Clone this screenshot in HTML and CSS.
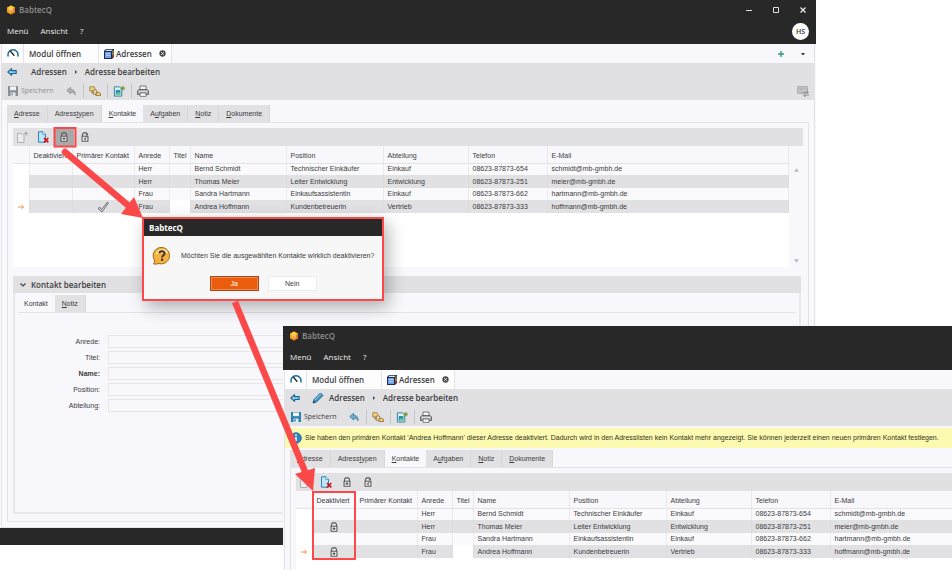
FILE: index.html
```html
<!DOCTYPE html>
<html lang="de">
<head>
    <meta charset="UTF-8">
    <meta name="viewport" content="width=device-width, initial-scale=1.0">
    <title>BabtecQ - Kontakt deaktivieren</title>
    <link rel="stylesheet" href="styles.css">
</head>
<body>

<!-- Icon definitions -->
<svg class="sprite" aria-hidden="true">
    <symbol id="i-logo" viewBox="0 0 12 12">
        <path d="M6 .5l4.800 2.700v5.600L6 11.500 1.200 8.800V3.200z" fill="#f6a21a"/>
        <path d="M6 .5l4.800 2.700L6 6 1.200 3.200z" fill="#ffc933"/>
        <path d="M6 6l4.800-2.800v5.600L6 11.500z" fill="#ee7a1c"/>
        <path d="M4 3.200l4 2v3.300L4 6.600z" fill="#ffe9a0"/>
        <path d="M5.200 5.200l1.800.9v1.200l-1.800-.9z" fill="#e8611a"/>
    </symbol>
    <symbol id="i-gauge" viewBox="0 0 12 12">
        <path d="M1.300 8.500a5 5 0 1 1 9.400 0" fill="none" stroke="#1f6f99" stroke-width="1.500"/>
        <path d="M3.600 3.400l3.300 3.800" stroke="#222" stroke-width="1.400" stroke-linecap="round"/>
    </symbol>
    <symbol id="i-book" viewBox="0 0 12 12">
        <path d="M1 3l2-2h8v8l-2 2H1z" fill="#222c48"/>
        <path d="M2 4h6v6H2z" fill="#6f9fe6"/>
        <path d="M3 5.500h4M3 7.500h4" stroke="#d4e4ff" stroke-width=".7"/>
        <path d="M3.500 1.800h6L8.500 3h-6z" fill="#dfe6f2"/>
        <path d="M9.200 3l1.500-1v2l-1.500 1z" fill="#4caf50"/>
        <path d="M9.200 5.300l1.500-1v2l-1.500 1z" fill="#f5a623"/>
        <path d="M9.200 7.600l1.500-1v2l-1.500 1z" fill="#d9372c"/>
    </symbol>
    <symbol id="i-close" viewBox="0 0 10 10">
        <circle cx="5" cy="5" r="4.500" fill="#4a4a4a"/>
        <path d="M3.200 3.200l3.600 3.600M6.800 3.200L3.200 6.800" stroke="#fff" stroke-width="1.300"/>
    </symbol>
    <symbol id="i-back" viewBox="0 0 12 10">
        <path d="M1 5l4.500-4v2.300H11v3.400H5.500V9z" fill="#8fcdf0" stroke="#17618f" stroke-width="1.300" stroke-linejoin="round"/>
    </symbol>
    <symbol id="i-pencil" viewBox="0 0 12 12">
        <path d="M1 11l1-3.500L8.500 1 11 3.500 4.500 10z" fill="#3b93c9" stroke="#1b5c88" stroke-width=".8"/>
        <path d="M3 8L9 2" stroke="#a8dcf5" stroke-width=".9"/>
        <path d="M1 11l.7-2 1.300 1.300z" fill="#222"/>
    </symbol>
    <symbol id="i-save" viewBox="0 0 12 12">
        <path d="M1 1h10v10H1z" fill="currentColor"/>
        <path d="M3 1.500h6v3.700H3z" fill="#eef6fb"/>
        <path d="M3.500 7.500h5V11h-5z" fill="#dceaf2"/>
        <path d="M4.300 8.200h1.400v2.300H4.300z" fill="currentColor"/>
    </symbol>
    <symbol id="i-undo" viewBox="0 0 12 12">
        <path d="M1 5.500L5.500 1.500V4C9 4 11 6 11 10.500 9.500 8 8 7.200 5.500 7.200v2.300z" fill="currentColor" fill-opacity=".55" stroke="currentColor" stroke-width="1" stroke-linejoin="round"/>
    </symbol>
    <symbol id="i-assign" viewBox="0 0 14 12">
        <path d="M1 1h5l1 1.500V6H1z" fill="#f1d27a" stroke="#8a6b2b" stroke-width=".8"/>
        <path d="M5 5h4v5H5z" fill="#fff4cf" stroke="#7a6a4b" stroke-width=".8"/>
        <circle cx="4.500" cy="7.500" r="1.700" fill="#a88a4a"/>
        <path d="M8 7.500h3.500l2 1.500v2.300H8z" fill="#e2b03c" stroke="#80632a" stroke-width=".8"/>
        <circle cx="11" cy="9.500" r="1" fill="#fff"/>
    </symbol>
    <symbol id="i-newdoc" viewBox="0 0 13 12">
        <path d="M1.500 1.500h5.500L9.500 4v7.500h-8z" fill="#d9f0f5" stroke="#2b7d9b"/>
        <path d="M3 5h5v5H3z" fill="#1c8fb4"/>
        <path d="M4 8.700l1.300-1.500 1 1 1-.8V10H4z" fill="#7fcf6a"/>
        <path d="M10.500.5v5M8 3h5M8.800 1.300l3.400 3.400M12.200 1.300L8.800 4.700" stroke="#6b8e23" stroke-width=".9"/>
    </symbol>
    <symbol id="i-print" viewBox="0 0 12 12">
        <path d="M3 1h6v4H3z" fill="#f7f7f9" stroke="#6b6b70" stroke-width=".9"/>
        <path d="M1.800 4.500h8.400l1.300 1.500v3.500H.5V6z" fill="#a9adb3" stroke="#5d6066" stroke-width=".9"/>
        <path d="M3 8h6v3.300H3z" fill="#fff" stroke="#5d6066" stroke-width=".8"/>
        <path d="M1.500 6.500h9" stroke="#e9eaee" stroke-width=".8"/>
    </symbol>
    <symbol id="i-layout" viewBox="0 0 12 12">
        <path d="M.5 1.500h10v7H.5z" fill="#c4c4c8" stroke="#b0b0b4"/>
        <path d="M1 3.500h9M4 3.500v5" stroke="#b2b2b6" stroke-width=".8"/>
        <path d="M6 7.500h5.500M9.500 5.800l2 1.700M12 10H6.500M8.500 11.700l-2-1.700" stroke="#8e8e93" stroke-width="1.100"/>
    </symbol>
    <symbol id="i-doc-add" viewBox="0 0 12 12">
        <path d="M1.500 2.500h4.500l2 2v7H1.500z" fill="#ececef" stroke="#b0b0b5"/>
        <path d="M10 .5v4M8 2.500h4" stroke="#a5a5aa" stroke-width="1.100"/>
    </symbol>
    <symbol id="i-doc-del" viewBox="0 0 12 12">
        <path d="M1.500.8h4.500L8.500 3.300v7.900h-7z" fill="#bfe6f8" stroke="#2b84b5"/>
        <path d="M5.800.8v2.700h2.700" fill="#fff" stroke="#2b84b5" stroke-width=".7"/>
        <path d="M7 7l4.300 4.300M11.300 7L7 11.300" stroke="#d0101c" stroke-width="1.700"/>
    </symbol>
    <symbol id="i-lock" viewBox="0 0 12 12">
        <path d="M3 5V2.500L4.300 1h3.400L9 2.500V5" fill="none" stroke="#5a5a5a" stroke-width="1.300"/>
        <path d="M2.500 5h7v6h-7z" fill="#f4f4f4" stroke="#5a5a5a" stroke-width="1.300"/>
        <path d="M6 6.300v3.400M4.300 8h3.400" stroke="#5a5a5a" stroke-width="1.400"/>
    </symbol>
    <symbol id="i-unlock" viewBox="0 0 12 12">
        <path d="M3 5V2.500L4.300 1h3.400L9 2.500v1L7 3.300" fill="none" stroke="#5a5a5a" stroke-width="1.300"/>
        <path d="M2.500 5h7v6h-7z" fill="#f4f4f4" stroke="#5a5a5a" stroke-width="1.300"/>
        <path d="M7.800 6.500L5.300 8.300l1.500 1.500" fill="none" stroke="#5a5a5a" stroke-width="1.300"/>
    </symbol>
    <symbol id="i-check" viewBox="0 0 12 12">
        <path d="M1 7.500l2-1.200L4.500 8.500 10.500 1l1 .8L5 11z" fill="#d4d4d6" stroke="#68686b" stroke-width=".9" stroke-linejoin="round"/>
    </symbol>
    <symbol id="i-row" viewBox="0 0 10 8">
        <path d="M1 4h7M5.500 1.500L8.500 4 5.500 6.500" fill="none" stroke="#f0893e" stroke-width="1.200"/>
    </symbol>
    <symbol id="i-question" viewBox="0 0 20 18">
        <path d="M1.500 17c1.200-1.200 1.300-2.500.9-4A8.200 8.200 0 1 1 7 16.500C5.500 17 3.500 17.300 1.500 17z" fill="#f6b23c" stroke="#9a6a20" stroke-width="1"/>
        <path d="M3.800 8a6.500 6.500 0 0 1 12.600-1.500C12 4.500 8 6 3.800 8z" fill="#fde4a4"/>
        <path d="M7.300 6.300C7.500 3.500 12.700 3.500 12.600 6.500c0 1.800-2.500 1.900-2.500 4" fill="none" stroke="#3a3026" stroke-width="1.900"/>
        <circle cx="10.100" cy="12.700" r="1.200" fill="#3a3026"/>
    </symbol>
    <symbol id="i-info" viewBox="0 0 12 12">
        <circle cx="6" cy="6" r="5.300" fill="#2d86c4" stroke="#1c5c8d" stroke-width=".8"/>
        <path d="M6 5v4" stroke="#fff" stroke-width="1.500"/>
        <circle cx="6" cy="3.200" r=".9" fill="#fff"/>
    </symbol>
</svg>

<main class="desktop">

    <!-- Window before the contact is deactivated -->
    <section class="window window-back">
        <header class="app-header">
            <div class="title-row">
                <svg class="icon-s"><use href="#i-logo"/></svg>
                <span class="app-name">BabtecQ</span>
                <div class="window-controls">
                    <button type="button" aria-label="Minimieren"><svg viewBox="0 0 8 8"><path d="M1 4.500h6" stroke="#ddd" fill="none"/></svg></button>
                    <button type="button" aria-label="Maximieren"><svg viewBox="0 0 8 8"><path d="M1.500 1.500h5v5h-5z" stroke="#ddd" fill="none"/></svg></button>
                    <button type="button" aria-label="Beenden"><svg viewBox="0 0 8 8"><path d="M1.500 1.500l5 5M6.500 1.500l-5 5" stroke="#eee" stroke-width="1.200"/></svg></button>
                </div>
            </div>
            <nav class="menu-row">
                <a href="#">Menü</a>
                <a href="#">Ansicht</a>
                <a href="#">?</a>
                <span class="avatar">HS</span>
            </nav>
        </header>
        <div class="workspace">
            <div class="module-tabs">
                <button type="button" class="tab-home" aria-label="Cockpit"><svg class="icon"><use href="#i-gauge"/></svg></button>
                <button type="button" class="tab-open">Modul öffnen</button>
                <button type="button" class="tab-module"><svg class="icon"><use href="#i-book"/></svg>Adressen<svg class="icon-close"><use href="#i-close"/></svg></button>
                <div class="tab-actions">
                    <button type="button" class="add" aria-label="Neuer Tab"><svg viewBox="0 0 8 8"><path d="M4 1v6M1 4h6" stroke="#2f9c83" stroke-width="1.400"/></svg></button>
                    <button type="button" aria-label="Tabliste"><svg viewBox="0 0 8 8"><path d="M2 3h4L4 5.500z" fill="#333"/></svg></button>
                </div>
            </div>
            <div class="page-head">
                <div class="breadcrumb">
                    <svg class="icon-s back"><use href="#i-back"/></svg>
                    <a href="#">Adressen</a>
                    <span class="sep"></span>
                    <a href="#">Adresse bearbeiten</a>
                </div>
                <div class="toolbar">
                    <button type="button" class="save" disabled><svg class="icon"><use href="#i-save"/></svg>Speichern</button>
                    <button type="button" class="undo" aria-label="Rückgängig" disabled><svg class="icon-s"><use href="#i-undo"/></svg></button>
                    <button type="button" aria-label="Zuordnen"><svg class="icon"><use href="#i-assign"/></svg></button>
                    <button type="button" aria-label="Neu"><svg class="icon"><use href="#i-newdoc"/></svg></button>
                    <button type="button" aria-label="Drucken"><svg class="icon"><use href="#i-print"/></svg></button>
                    <button type="button" class="layout" aria-label="Layout"><svg class="icon"><use href="#i-layout"/></svg></button>
                </div>
            </div>
            <div class="tabs">
                <button type="button"><u>A</u>dresse</button>
                <button type="button">Adress<u>t</u>ypen</button>
                <button type="button" class="active"><u>K</u>ontakte</button>
                <button type="button">A<u>u</u>fgaben</button>
                <button type="button"><u>N</u>otiz</button>
                <button type="button"><u>D</u>okumente</button>
            </div>
            <div class="panel">
                <div class="grid-toolbar">
                    <button type="button" aria-label="Kontakt hinzufügen" disabled><svg class="icon"><use href="#i-doc-add"/></svg></button>
                    <button type="button" aria-label="Kontakt löschen"><svg class="icon"><use href="#i-doc-del"/></svg></button>
                    <button type="button" class="pressed" aria-label="Deaktivieren"><svg class="icon-s"><use href="#i-lock"/></svg></button>
                    <button type="button" aria-label="Aktivieren"><svg class="icon-s"><use href="#i-unlock"/></svg></button>
                </div>
                <div class="grid">
                    <table>
                        <colgroup>
                            <col class="c-mark"><col class="c-off"><col class="c-prim"><col class="c-anrede"><col class="c-titel">
                            <col class="c-name"><col class="c-pos"><col class="c-abt"><col class="c-tel"><col>
                        </colgroup>
                        <thead>
                            <tr><th></th><th>Deaktiviert</th><th>Primärer Kontakt</th><th>Anrede</th><th>Titel</th><th>Name</th><th>Position</th><th>Abteilung</th><th>Telefon</th><th>E-Mail</th></tr>
                        </thead>
                        <tbody>
                            <tr><td></td><td></td><td></td><td>Herr</td><td></td><td>Bernd Schmidt</td><td>Technischer Einkäufer</td><td>Einkauf</td><td>08623-87873-654</td><td>schmidt@mb-gmbh.de</td></tr>
                            <tr><td></td><td></td><td></td><td>Herr</td><td></td><td>Thomas Meier</td><td>Leiter Entwicklung</td><td>Entwicklung</td><td>08623-87873-251</td><td>meier@mb-gmbh.de</td></tr>
                            <tr><td></td><td></td><td></td><td>Frau</td><td></td><td>Sandra Hartmann</td><td>Einkaufsassistentin</td><td>Einkauf</td><td>08623-87873-662</td><td>hartmann@mb-gmbh.de</td></tr>
                            <tr class="current"><td><svg class="row-mark"><use href="#i-row"/></svg></td><td></td><td class="flag"><svg class="icon"><use href="#i-check"/></svg></td><td>Frau</td><td></td><td>Andrea Hoffmann</td><td>Kundenbetreuerin</td><td>Vertrieb</td><td>08623-87873-333</td><td>hoffmann@mb-gmbh.de</td></tr>
                        </tbody>
                    </table>
                    <div class="scrollbar">
                        <svg viewBox="0 0 6 4"><path d="M0 4h6L3 0z" fill="#b9b9bd"/></svg>
                        <svg viewBox="0 0 6 4"><path d="M0 0h6L3 4z" fill="#b9b9bd"/></svg>
                    </div>
                </div>
                <section class="detail">
                    <h2><svg viewBox="0 0 6 4"><path d="M.5.5L3 3 5.500.5" fill="none" stroke="#444" stroke-width="1.200"/></svg>Kontakt bearbeiten</h2>
                    <div class="tabs tabs-detail">
                        <button type="button" class="active">Kontakt</button>
                        <button type="button"><u>N</u>otiz</button>
                    </div>
                    <form class="contact-form">
                        <label for="anrede">Anrede:</label>
                        <input type="text" id="anrede" name="anrede">
                        <label for="titel">Titel:</label>
                        <input type="text" id="titel" name="titel">
                        <label for="name" class="required">Name:</label>
                        <input type="text" id="name" name="name">
                        <label for="position">Position:</label>
                        <input type="text" id="position" name="position">
                        <label for="abteilung">Abteilung:</label>
                        <input type="text" id="abteilung" name="abteilung">
                    </form>
                </section>
            </div>
        </div>
        <footer class="status-bar"></footer>
    </section>

    <!-- Confirmation dialog -->
    <section class="dialog" role="dialog" aria-labelledby="dialogTitle">
        <h2 id="dialogTitle">BabtecQ</h2>
        <div class="dialog-text">
            <svg class="question"><use href="#i-question"/></svg>
            <p>Möchten Sie die ausgewählten Kontakte wirklich deaktivieren?</p>
        </div>
        <div class="dialog-buttons">
            <button type="button" class="primary">Ja</button>
            <button type="button">Nein</button>
        </div>
    </section>

    <!-- Window after the contact is deactivated -->
    <section class="window window-front">
        <header class="app-header">
            <div class="title-row">
                <svg class="icon-s"><use href="#i-logo"/></svg>
                <span class="app-name">BabtecQ</span>
            </div>
            <nav class="menu-row">
                <a href="#">Menü</a>
                <a href="#">Ansicht</a>
                <a href="#">?</a>
            </nav>
        </header>
        <div class="workspace">
            <div class="module-tabs">
                <button type="button" class="tab-home" aria-label="Cockpit"><svg class="icon"><use href="#i-gauge"/></svg></button>
                <button type="button" class="tab-open">Modul öffnen</button>
                <button type="button" class="tab-module"><svg class="icon"><use href="#i-book"/></svg>Adressen<svg class="icon-close"><use href="#i-close"/></svg></button>
            </div>
            <div class="page-head">
                <div class="breadcrumb">
                    <svg class="icon-s back"><use href="#i-back"/></svg>
                    <svg class="icon pencil"><use href="#i-pencil"/></svg>
                    <a href="#">Adressen</a>
                    <span class="sep"></span>
                    <a href="#">Adresse bearbeiten</a>
                </div>
                <div class="toolbar">
                    <button type="button" class="save"><svg class="icon"><use href="#i-save"/></svg>Speichern</button>
                    <button type="button" class="undo" aria-label="Rückgängig"><svg class="icon-s"><use href="#i-undo"/></svg></button>
                    <button type="button" aria-label="Zuordnen"><svg class="icon"><use href="#i-assign"/></svg></button>
                    <button type="button" aria-label="Neu"><svg class="icon"><use href="#i-newdoc"/></svg></button>
                    <button type="button" aria-label="Drucken"><svg class="icon"><use href="#i-print"/></svg></button>
                </div>
            </div>
            <p class="notice"><svg class="icon"><use href="#i-info"/></svg>Sie haben den primären Kontakt 'Andrea Hoffmann' dieser Adresse deaktiviert. Dadurch wird in den Adresslisten kein Kontakt mehr angezeigt. Sie können jederzeit einen neuen primären Kontakt festlegen.</p>
            <div class="tabs">
                <button type="button"><u>A</u>dresse</button>
                <button type="button">Adress<u>t</u>ypen</button>
                <button type="button" class="active"><u>K</u>ontakte</button>
                <button type="button">A<u>u</u>fgaben</button>
                <button type="button"><u>N</u>otiz</button>
                <button type="button"><u>D</u>okumente</button>
            </div>
            <div class="panel">
                <div class="grid-toolbar">
                    <button type="button" aria-label="Kontakt hinzufügen" disabled><svg class="icon"><use href="#i-doc-add"/></svg></button>
                    <button type="button" aria-label="Kontakt löschen"><svg class="icon"><use href="#i-doc-del"/></svg></button>
                    <button type="button" aria-label="Deaktivieren"><svg class="icon-s"><use href="#i-lock"/></svg></button>
                    <button type="button" aria-label="Aktivieren"><svg class="icon-s"><use href="#i-unlock"/></svg></button>
                </div>
                <div class="grid">
                    <table>
                        <colgroup>
                            <col class="c-mark"><col class="c-off"><col class="c-prim"><col class="c-anrede"><col class="c-titel">
                            <col class="c-name"><col class="c-pos"><col class="c-abt"><col class="c-tel"><col>
                        </colgroup>
                        <thead>
                            <tr><th></th><th>Deaktiviert</th><th>Primärer Kontakt</th><th>Anrede</th><th>Titel</th><th>Name</th><th>Position</th><th>Abteilung</th><th>Telefon</th><th>E-Mail</th></tr>
                        </thead>
                        <tbody>
                            <tr><td></td><td></td><td></td><td>Herr</td><td></td><td>Bernd Schmidt</td><td>Technischer Einkäufer</td><td>Einkauf</td><td>08623-87873-654</td><td>schmidt@mb-gmbh.de</td></tr>
                            <tr><td></td><td class="flag"><svg class="icon-s"><use href="#i-lock"/></svg></td><td></td><td>Herr</td><td></td><td>Thomas Meier</td><td>Leiter Entwicklung</td><td>Entwicklung</td><td>08623-87873-251</td><td>meier@mb-gmbh.de</td></tr>
                            <tr><td></td><td></td><td></td><td>Frau</td><td></td><td>Sandra Hartmann</td><td>Einkaufsassistentin</td><td>Einkauf</td><td>08623-87873-662</td><td>hartmann@mb-gmbh.de</td></tr>
                            <tr class="current"><td><svg class="row-mark"><use href="#i-row"/></svg></td><td class="flag"><svg class="icon-s"><use href="#i-lock"/></svg></td><td></td><td>Frau</td><td></td><td>Andrea Hoffmann</td><td>Kundenbetreuerin</td><td>Vertrieb</td><td>08623-87873-333</td><td>hoffmann@mb-gmbh.de</td></tr>
                        </tbody>
                    </table>
                </div>
            </div>
        </div>
    </section>

    <!-- Step markers and arrows above the windows -->
    <svg class="marks" viewBox="0 0 952 570" aria-hidden="true">
        <g fill="none" stroke="#fb4848">
            <rect x="54.500" y="128" width="21" height="18.500" stroke-width="2"/>
            <rect x="313" y="492" width="42" height="67" stroke-width="2"/>
            <path d="M65 152L130 207" stroke-width="6.500" stroke-linecap="round"/>
            <path d="M235 302L306 474" stroke-width="6.500"/>
        </g>
        <path d="M143 218l-22-4 13-17z" fill="#fb4848"/>
        <path d="M313 491l-18-17 20-6z" fill="#fb4848"/>
    </svg>
</main>

</body>
</html>
```
FILE: styles.css
```css
* {
    margin: 0;
    padding: 0;
    box-sizing: border-box;
}

body {
    font-family: "Liberation Sans", Arial, sans-serif;
    font-size: 7px;
    line-height: 10px;
    color: #3c3c3e;
    background: #fff;
    overflow: hidden;
}

button,
input {
    font: inherit;
    color: inherit;
    border: none;
    background: none;
}

button {
    display: flex;
    align-items: center;
    justify-content: center;
}

a {
    color: inherit;
    text-decoration: none;
}

svg {
    display: block;
    flex: none;
}

.sprite {
    position: absolute;
    width: 0;
    height: 0;
}

.icon {
    width: 12px;
    height: 12px;
}

.icon-s {
    width: 10px;
    height: 10px;
}

.desktop {
    position: relative;
    height: 100vh;
    overflow: hidden;
}

/* Windows */
.window {
    position: absolute;
    background: #f8f7fb;
}

.window-back {
    top: 0;
    left: 0;
    right: 136px;
}

.window-front {
    top: 326px;
    left: 283px;
    right: -16px;
    bottom: 0;
}

.app-header {
    height: 44px;
    background: #292829;
    font-family: "Open Sans", "Noto Sans", sans-serif;
    font-size: 8px;
}

.title-row {
    display: flex;
    align-items: center;
    gap: 3px;
    height: 20px;
    padding-left: 6px;
}

.app-name {
    color: #8d8d8d;
    font-weight: 600;
}

.window-controls {
    display: flex;
    gap: 19px;
    margin-left: auto;
    padding-right: 9px;
}

.window-controls svg,
.tab-actions svg {
    width: 8px;
    height: 8px;
}

.menu-row {
    display: flex;
    align-items: center;
    gap: 12px;
    height: 22px;
    padding: 0 7px;
    color: #ececec;
}

.avatar {
    width: 17px;
    height: 17px;
    margin-left: auto;
    border-radius: 50%;
    background: #fff;
    color: #333;
    font-size: 7px;
    font-weight: 600;
    line-height: 17px;
    text-align: center;
}

.workspace {
    margin: 0 1px;
    border: 1px solid #e3e2e7;
    border-top: none;
}

/* Module tabs */
.module-tabs {
    display: flex;
    height: 19px;
    font-family: "Open Sans", "Noto Sans", sans-serif;
    font-size: 8px;
    font-weight: 600;
}

.module-tabs > button {
    justify-content: flex-start;
    background: #fdfdfe;
    border-right: 1px solid #e3e2e7;
}

.module-tabs .tab-home {
    width: 22px;
    padding-left: 5px;
}

.module-tabs .tab-open {
    width: 75px;
    padding-left: 5px;
}

.module-tabs .tab-module {
    width: 73px;
    gap: 1px;
    padding-left: 4px;
}

.icon-close {
    width: 7px;
    height: 7px;
    margin-left: 6px;
}

.tab-actions {
    display: flex;
    gap: 14px;
    margin-left: auto;
    padding-right: 7px;
}

/* Breadcrumb and main toolbar */
.page-head {
    height: 37px;
    background: #e1e0e3;
}

.breadcrumb {
    display: flex;
    align-items: center;
    height: 18px;
    padding-left: 5px;
    font-family: "Open Sans", "Noto Sans", sans-serif;
    font-size: 8px;
    font-weight: 600;
}

.back {
    margin-right: 14px;
}

.pencil {
    margin: 0 5px 0 -2px;
}

.sep {
    margin: 0 8px;
    border: 2px solid transparent;
    border-left-color: #444;
    border-right: none;
}

.toolbar {
    display: flex;
    align-items: center;
    height: 19px;
    padding: 0 5px;
}

.toolbar button {
    height: 14px;
    padding: 0 6px 0 5px;
    border-left: 1px solid #c6c5c9;
}

.toolbar .save {
    gap: 2px;
    padding: 0;
    border: none;
    font-family: "Open Sans", "Noto Sans", sans-serif;
}

.toolbar .save svg {
    color: #2c80ae;
}

.toolbar .undo {
    padding: 0 7px 0 12px;
    border: none;
    color: #2c80ae;
}

.toolbar button:disabled,
.toolbar .save:disabled svg {
    color: #8e8e92;
}

.toolbar .layout {
    margin-left: auto;
    padding: 0;
    border: none;
}

.notice {
    display: flex;
    align-items: center;
    gap: 3px;
    height: 20px;
    margin-top: 2px;
    padding-left: 5px;
    background: #fcfab0;
    color: #33331c;
    white-space: nowrap;
}

/* Page tabs */
.tabs {
    display: flex;
    height: 17px;
    margin: 5px 5px 0;
}

.notice + .tabs {
    margin-top: 2px;
}

.tabs button {
    padding: 0 7px;
    background: #e1e0e3;
    border-right: 1px solid #d8d7da;
}

.tabs .active {
    background: #f8f7fb;
    border: none;
}

.panel {
    margin: 0 5px 5px;
    padding: 5px 5px 7px;
    border: 1px solid #e3e2e7;
}

.grid-toolbar {
    display: flex;
    align-items: center;
    height: 18px;
    padding-left: 3px;
    gap: 1px;
    background: #e1e0e3;
}

.grid-toolbar button {
    width: 20px;
    height: 17px;
}

.grid-toolbar button:first-child {
    width: 12px;
    margin-right: 4px;
}

.grid-toolbar .pressed {
    background: #a9a8aa;
}

/* Contact table */
.grid {
    display: flex;
    min-height: 121px;
    background: #fff;
}

.grid table {
    flex: 1;
    align-self: flex-start;
    width: 100%;
    table-layout: fixed;
    border-collapse: collapse;
}

.c-mark { width: 16px; }
.c-off { width: 43px; }
.c-prim { width: 62px; }
.c-anrede { width: 35px; }
.c-titel { width: 21px; }
.c-name { width: 96px; }
.c-pos { width: 97px; }
.c-abt { width: 85px; }
.c-tel { width: 79px; }

th {
    height: 17px;
    padding: 3px 0 0 4px;
    border-right: 1px solid #e9e8ec;
    border-bottom: 1px solid #e3e2e7;
    background: #f8f7fb;
    font-weight: normal;
    text-align: left;
    white-space: nowrap;
}

td {
    height: 12px;
    padding: 0 0 0 4px;
    border-right: 1px solid #ebeaee;
    background: #faf9fc;
    white-space: nowrap;
}

tr:nth-child(even) td {
    height: 13px;
    border-color: #dddce0;
    background: #e1e0e3;
}

tbody td:first-child,
tbody tr.current td:first-child,
tbody tr.current td:nth-child(5) {
    background: #fff;
}

.flag svg {
    margin-left: 12px;
}

.window-back .flag svg {
    margin-left: 20px;
}

.row-mark {
    width: 8px;
    height: 6px;
}

.scrollbar {
    display: flex;
    flex-direction: column;
    align-items: center;
    justify-content: space-between;
    width: 14px;
    padding: 22px 0 4px;
    background: #f8f7fb;
}

.scrollbar svg {
    width: 5px;
    height: 4px;
}

/* Detail section */
.detail {
    margin: 9px 2px 0 0;
    border: 2px solid #e8e7eb;
    border-top: none;
}

.detail h2 {
    display: flex;
    align-items: center;
    gap: 5px;
    height: 17px;
    margin: 0 -2px;
    padding-left: 7px;
    background: #e1e0e3;
    font-family: "Open Sans", "Noto Sans", sans-serif;
    font-size: 8px;
    font-weight: 600;
}

.detail h2 svg {
    width: 6px;
    height: 4px;
}

.tabs-detail {
    margin: 2px 2px 0;
}

.contact-form {
    display: grid;
    grid-template-columns: 82px 1fr;
    gap: 3px 8px;
    align-content: start;
    min-height: 200px;
    margin: 0 3px;
    padding-top: 22px;
    border-top: 1px solid #e3e2e7;
}

.contact-form label {
    line-height: 13px;
    text-align: right;
}

.contact-form .required {
    font-weight: bold;
}

.contact-form input {
    height: 13px;
    padding: 0 3px;
    border: 1px solid #e6e5e9;
}

.status-bar {
    height: 17px;
    background: #292829;
}

/* Dialog */
.dialog {
    position: absolute;
    top: 217px;
    left: 142px;
    border: 2px solid #fb4848;
    background: #f7f7f8;
    box-shadow: 4px 6px 16px rgba(0, 0, 0, 0.3);
}

.dialog h2 {
    padding: 0 5px;
    background: #292829;
    color: #fff;
    font-family: "Open Sans", "Noto Sans", sans-serif;
    font-size: 8px;
    line-height: 17px;
}

.dialog-text {
    display: flex;
    align-items: center;
    gap: 9px;
    padding: 11px 8px;
}

.question {
    width: 20px;
    height: 18px;
}

.dialog-buttons {
    display: flex;
    justify-content: center;
    gap: 9px;
    padding-bottom: 8px;
}

.dialog-buttons button {
    width: 49px;
    height: 15px;
    border: 1px solid #ececef;
    background: #fff;
}

.dialog-buttons .primary {
    border-color: #a8481a;
    outline: 1px solid #f08a4e;
    outline-offset: -2px;
    background: #e95d0c;
    color: #fff;
}

/* Markers */
.marks {
    position: absolute;
    top: 0;
    left: 0;
    width: 952px;
    height: 570px;
    pointer-events: none;
}
```
